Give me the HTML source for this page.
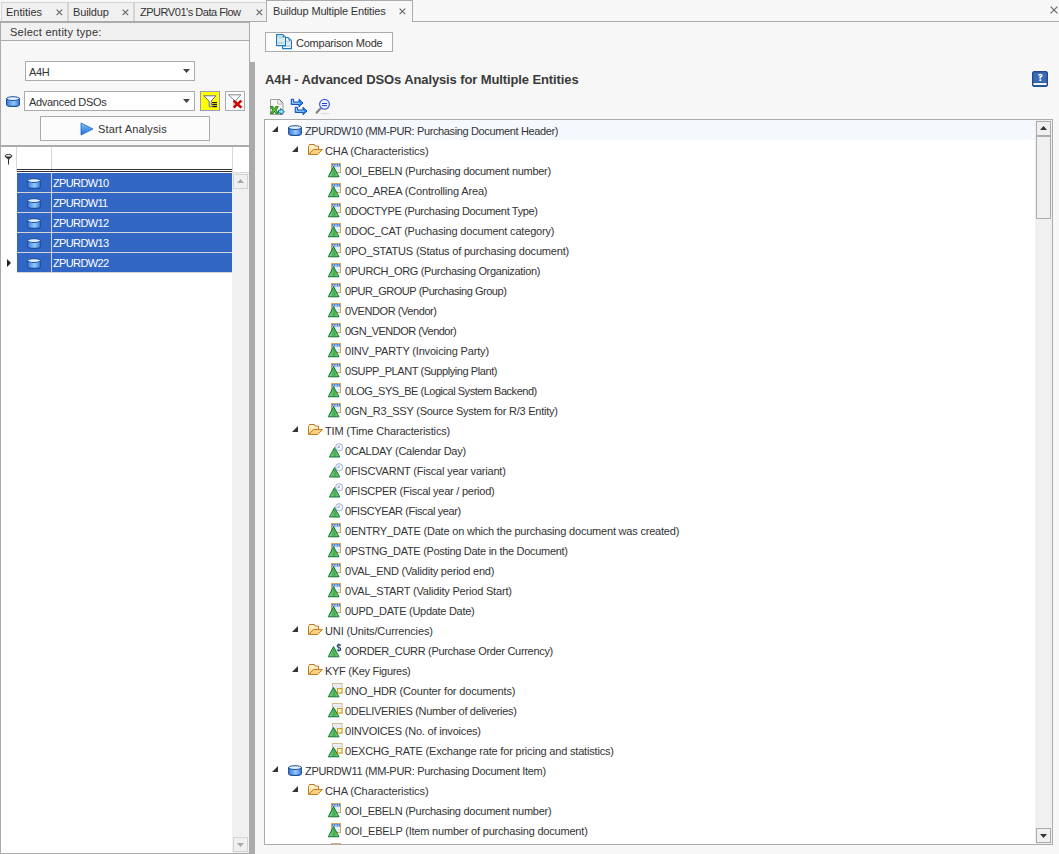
<!DOCTYPE html>
<html><head><meta charset="utf-8">
<style>
*{box-sizing:border-box;margin:0;padding:0}
html,body{width:1059px;height:854px;overflow:hidden;background:#f7f7f7;font-family:"Liberation Sans",sans-serif;font-size:11px;color:#333;position:relative}
.a{position:absolute}
.t{position:absolute;white-space:nowrap;line-height:15px;letter-spacing:-0.3px}
.tab{position:absolute;top:2px;height:19px;background:#f0f0f0;border-top:1px solid #d4d4d4;}
.tx{position:absolute;font-size:11px;color:#666}
.box{position:absolute;border:1px solid #ababab;background:#fff}
</style></head><body>
<!-- TAB STRIP -->
<div class="a" style="left:0;top:21px;width:1059px;height:1px;background:#ababab"></div><div class="a" style="left:0;top:22px;width:250px;height:1px;background:#ababab"></div>
<div class="tab" style="left:1px;width:67px;border-left:1px solid #d4d4d4;border-right:1px solid #d4d4d4"></div>
<div class="t" style="left:6px;top:5px;letter-spacing:0px">Entities</div>
<svg class="a" style="left:56px;top:9px" width="7" height="7" viewBox="0 0 7 7"><path d="M0.6 0.6L6.2 6.2M6.2 0.6L0.6 6.2" stroke="#6a6a6a" stroke-width="1.2"/></svg>
<div class="tab" style="left:68px;width:66px;border-left:1px solid #d4d4d4;border-right:1px solid #d4d4d4"></div>
<div class="t" style="left:73px;top:5px;letter-spacing:-0.13px">Buildup</div>
<svg class="a" style="left:122px;top:9px" width="7" height="7" viewBox="0 0 7 7"><path d="M0.6 0.6L6.2 6.2M6.2 0.6L0.6 6.2" stroke="#6a6a6a" stroke-width="1.2"/></svg>
<div class="tab" style="left:134px;width:132px;border-left:1px solid #d4d4d4"></div>
<div class="t" style="left:140px;top:5px;letter-spacing:-0.47px">ZPURV01's Data Flow</div>
<svg class="a" style="left:256px;top:9px" width="7" height="7" viewBox="0 0 7 7"><path d="M0.6 0.6L6.2 6.2M6.2 0.6L0.6 6.2" stroke="#6a6a6a" stroke-width="1.2"/></svg>
<div class="a" style="left:266px;top:0;width:147px;height:22px;background:#f7f7f7;border:1px solid #ababab;border-bottom:none"></div>
<div class="t" style="left:273px;top:4px;letter-spacing:-0.17px">Buildup Multiple Entities</div>
<svg class="a" style="left:399px;top:8px" width="7" height="7" viewBox="0 0 7 7"><path d="M0.6 0.6L6.2 6.2M6.2 0.6L0.6 6.2" stroke="#6a6a6a" stroke-width="1.2"/></svg>
<svg class="a" style="left:1050px;top:6px" width="8" height="8" viewBox="0 0 8 8"><path d="M0.6 0.6L7.4 7.4M7.4 0.6L0.6 7.4" stroke="#6a6a6a" stroke-width="1.2"/></svg>

<!-- LEFT PANEL -->
<div class="a" style="left:0;top:23px;width:250px;height:831px;border-left:1px solid #ababab;border-right:1px solid #ababab;border-bottom:1px solid #ababab;background:#f7f7f7"></div>
<div class="a" style="left:1px;top:23px;width:248px;height:18px;background:#f0f0f0;border-bottom:1px solid #ababab"></div>
<div class="t" style="left:10px;top:25px;letter-spacing:0.25px">Select entity type:</div>

<div class="box" style="left:25px;top:61px;width:170px;height:20px"></div>
<div class="t" style="left:29px;top:65px">A4H</div>
<svg class="a" style="left:183px;top:69px" width="7" height="4"><path d="M0 0H7L3.5 4Z" fill="#444"/></svg>

<div class="box" style="left:24px;top:91px;width:171px;height:20px"></div>
<div class="t" style="left:29px;top:95px">Advanced DSOs</div>
<svg class="a" style="left:183px;top:99px" width="7" height="4"><path d="M0 0H7L3.5 4Z" fill="#444"/></svg>

<svg class="a" style="left:6px;top:96px" width="14" height="11" viewBox="0 0 14 11"><defs><linearGradient id="cg42" x1="0" y1="0" x2="1" y2="0"><stop offset="0" stop-color="#3c7bd4"/><stop offset="0.55" stop-color="#93c9fc"/><stop offset="1" stop-color="#3c7bd4"/></linearGradient></defs><path d="M0.6 2.6V8.4Q0.6 10.4 7 10.4Q13.4 10.4 13.4 8.4V2.6Z" fill="url(#cg42)" stroke="#1c4f9f" stroke-width="1.1"/><ellipse cx="7" cy="2.6" rx="6.4" ry="1.9" fill="#e3effc" stroke="#1c4f9f" stroke-width="1"/></svg>

<div class="a" style="left:200px;top:91px;width:20px;height:20px;background:#ffff00;border:1px solid #9a9ab8"></div>
<svg class="a" style="left:203px;top:95px" width="15" height="14" viewBox="0 0 15 14"><path d="M0.6 0.8H12.9L8.2 6V11.6Q7.2 12.3 6.2 11.6V6Z" fill="#fff" stroke="#585c88" stroke-width="0.9" stroke-linejoin="round"/><path d="M9.2 7.6H14M9.2 9.6H14M9.2 11.6H14" stroke="#1a1a1a" stroke-width="1.1"/></svg>
<div class="box" style="left:225px;top:91px;width:20px;height:20px;background:#fcfcfc"></div>
<svg class="a" style="left:228px;top:94px" width="15" height="15" viewBox="0 0 15 15"><path d="M0.6 0.8H12.9L8 6.2V12L6 11.4V6.2Z" fill="#fff" stroke="#7a7a7a" stroke-width="0.9" stroke-linejoin="round"/><path d="M5.6 6.6L13.4 13.6M13.4 6.6L5.6 13.6" stroke="#d20000" stroke-width="2.6"/></svg>

<div class="box" style="left:40px;top:116px;width:170px;height:25px;background:#fcfcfc"></div>
<svg class="a" style="left:80px;top:122px" width="14" height="14" viewBox="0 0 14 14"><defs><linearGradient id="pl" x1="0" y1="0" x2="0" y2="1"><stop offset="0" stop-color="#7fc0ff"/><stop offset="1" stop-color="#1f6fd8"/></linearGradient></defs><path d="M1 1L13 7L1 13Z" fill="url(#pl)" stroke="#2a64c0" stroke-width="0.8"/></svg>
<div class="t" style="left:98px;top:122px;letter-spacing:0.16px">Start Analysis</div>

<div class="a" style="left:1px;top:145px;width:248px;height:2px;background:#ababab"></div>
<!-- grid -->
<div class="a" style="left:1px;top:147px;width:248px;height:706px;background:#fff"></div>
<div class="a" style="left:16px;top:147px;width:1px;height:25px;background:#d8d8d8"></div>
<div class="a" style="left:51px;top:147px;width:1px;height:25px;background:#d8d8d8"></div>
<div class="a" style="left:232px;top:147px;width:1px;height:25px;background:#d8d8d8"></div>
<svg class="a" style="left:4px;top:154px" width="9" height="11" viewBox="0 0 9 11"><ellipse cx="4.5" cy="2" rx="3.6" ry="1.5" fill="#fff" stroke="#333" stroke-width="1"/><path d="M1 2.5L4 5.5V10.5H5V5.5L8 2.5Z" fill="#333"/></svg>
<div class="a" style="left:17px;top:169px;width:215px;height:1px;background:#333"></div>
<div class="a" style="left:17px;top:171px;width:215px;height:1px;background:#333"></div>
<div class="a" style="left:17px;top:173px;width:215px;height:19px;background:#3166c4"></div>
<div class="a" style="left:51px;top:173px;width:1px;height:19px;background:#d4d4d4"></div>
<div class="a" style="left:17px;top:192px;width:215px;height:1px;background:#d4d4d4"></div>
<svg class="a" style="left:27px;top:178px" width="14" height="11" viewBox="0 0 14 11"><defs><linearGradient id="cg1" x1="0" y1="0" x2="1" y2="0"><stop offset="0" stop-color="#3c7bd4"/><stop offset="0.55" stop-color="#93c9fc"/><stop offset="1" stop-color="#3c7bd4"/></linearGradient></defs><path d="M0.6 2.6V8.4Q0.6 10.4 7 10.4Q13.4 10.4 13.4 8.4V2.6Z" fill="url(#cg1)" stroke="#1c4f9f" stroke-width="1.1"/><ellipse cx="7" cy="2.6" rx="6.4" ry="1.9" fill="#e3effc" stroke="#1c4f9f" stroke-width="1"/></svg>
<div class="t" style="left:53px;top:176px;color:#fff;letter-spacing:-0.64px">ZPURDW10</div>
<div class="a" style="left:17px;top:193px;width:215px;height:19px;background:#3166c4"></div>
<div class="a" style="left:51px;top:193px;width:1px;height:19px;background:#d4d4d4"></div>
<div class="a" style="left:17px;top:212px;width:215px;height:1px;background:#d4d4d4"></div>
<svg class="a" style="left:27px;top:198px" width="14" height="11" viewBox="0 0 14 11"><defs><linearGradient id="cg2" x1="0" y1="0" x2="1" y2="0"><stop offset="0" stop-color="#3c7bd4"/><stop offset="0.55" stop-color="#93c9fc"/><stop offset="1" stop-color="#3c7bd4"/></linearGradient></defs><path d="M0.6 2.6V8.4Q0.6 10.4 7 10.4Q13.4 10.4 13.4 8.4V2.6Z" fill="url(#cg2)" stroke="#1c4f9f" stroke-width="1.1"/><ellipse cx="7" cy="2.6" rx="6.4" ry="1.9" fill="#e3effc" stroke="#1c4f9f" stroke-width="1"/></svg>
<div class="t" style="left:53px;top:196px;color:#fff;letter-spacing:-0.64px">ZPURDW11</div>
<div class="a" style="left:17px;top:213px;width:215px;height:19px;background:#3166c4"></div>
<div class="a" style="left:51px;top:213px;width:1px;height:19px;background:#d4d4d4"></div>
<div class="a" style="left:17px;top:232px;width:215px;height:1px;background:#d4d4d4"></div>
<svg class="a" style="left:27px;top:218px" width="14" height="11" viewBox="0 0 14 11"><defs><linearGradient id="cg3" x1="0" y1="0" x2="1" y2="0"><stop offset="0" stop-color="#3c7bd4"/><stop offset="0.55" stop-color="#93c9fc"/><stop offset="1" stop-color="#3c7bd4"/></linearGradient></defs><path d="M0.6 2.6V8.4Q0.6 10.4 7 10.4Q13.4 10.4 13.4 8.4V2.6Z" fill="url(#cg3)" stroke="#1c4f9f" stroke-width="1.1"/><ellipse cx="7" cy="2.6" rx="6.4" ry="1.9" fill="#e3effc" stroke="#1c4f9f" stroke-width="1"/></svg>
<div class="t" style="left:53px;top:216px;color:#fff;letter-spacing:-0.64px">ZPURDW12</div>
<div class="a" style="left:17px;top:233px;width:215px;height:19px;background:#3166c4"></div>
<div class="a" style="left:51px;top:233px;width:1px;height:19px;background:#d4d4d4"></div>
<div class="a" style="left:17px;top:252px;width:215px;height:1px;background:#d4d4d4"></div>
<svg class="a" style="left:27px;top:238px" width="14" height="11" viewBox="0 0 14 11"><defs><linearGradient id="cg4" x1="0" y1="0" x2="1" y2="0"><stop offset="0" stop-color="#3c7bd4"/><stop offset="0.55" stop-color="#93c9fc"/><stop offset="1" stop-color="#3c7bd4"/></linearGradient></defs><path d="M0.6 2.6V8.4Q0.6 10.4 7 10.4Q13.4 10.4 13.4 8.4V2.6Z" fill="url(#cg4)" stroke="#1c4f9f" stroke-width="1.1"/><ellipse cx="7" cy="2.6" rx="6.4" ry="1.9" fill="#e3effc" stroke="#1c4f9f" stroke-width="1"/></svg>
<div class="t" style="left:53px;top:236px;color:#fff;letter-spacing:-0.64px">ZPURDW13</div>
<div class="a" style="left:17px;top:253px;width:215px;height:19px;background:#3166c4"></div>
<div class="a" style="left:51px;top:253px;width:1px;height:19px;background:#d4d4d4"></div>
<div class="a" style="left:17px;top:272px;width:215px;height:1px;background:#d4d4d4"></div>
<svg class="a" style="left:27px;top:258px" width="14" height="11" viewBox="0 0 14 11"><defs><linearGradient id="cg5" x1="0" y1="0" x2="1" y2="0"><stop offset="0" stop-color="#3c7bd4"/><stop offset="0.55" stop-color="#93c9fc"/><stop offset="1" stop-color="#3c7bd4"/></linearGradient></defs><path d="M0.6 2.6V8.4Q0.6 10.4 7 10.4Q13.4 10.4 13.4 8.4V2.6Z" fill="url(#cg5)" stroke="#1c4f9f" stroke-width="1.1"/><ellipse cx="7" cy="2.6" rx="6.4" ry="1.9" fill="#e3effc" stroke="#1c4f9f" stroke-width="1"/></svg>
<div class="t" style="left:53px;top:256px;color:#fff;letter-spacing:-0.64px">ZPURDW22</div>
<svg class="a" style="left:7px;top:259px" width="4" height="8"><path d="M0 0L4 4L0 8Z" fill="#222"/></svg>

<div class="a" style="left:232px;top:172px;width:17px;height:681px;background:#f0f0f0;border-top:1px solid #d8d8d8"></div>
<div class="a" style="left:233px;top:174px;width:15px;height:15px;border:1px solid #d4d4d4;background:#f0f0f0"></div>
<svg class="a" style="left:237px;top:179px" width="7" height="4"><path d="M0 4H7L3.5 0Z" fill="#a8a8a8"/></svg>
<div class="a" style="left:233px;top:837px;width:15px;height:15px;border:1px solid #d4d4d4;background:#f0f0f0"></div>
<svg class="a" style="left:237px;top:843px" width="7" height="4"><path d="M0 0H7L3.5 4Z" fill="#a8a8a8"/></svg>

<!-- splitter -->
<div class="a" style="left:249px;top:62px;width:6px;height:792px;background:#ababab"></div>

<!-- RIGHT -->
<div class="box" style="left:265px;top:32px;width:128px;height:20px;background:#fcfcfc"></div>
<svg class="a" style="left:275px;top:33px" width="18" height="18" viewBox="0 0 18 18"><defs><linearGradient id="dg" x1="0" y1="0" x2="0" y2="1"><stop offset="0" stop-color="#a9cde3"/><stop offset="0.5" stop-color="#e6f2f9"/><stop offset="1" stop-color="#a3c9e2"/></linearGradient></defs><path d="M7.6 4.6H13.3L16.4 7.7V15.6H7.6Z" fill="#fff" stroke="#1f78b8" stroke-width="1.2" stroke-linejoin="round"/><rect x="9" y="7.5" width="6" height="6.5" fill="url(#dg)"/><path d="M13.6 6.4Q13.9 7.3 14.8 7.5" stroke="#15508a" stroke-width="1" fill="none"/><path d="M1.6 1.6H7.8L10.4 4.2V12.6H1.6Z" fill="#fff" stroke="#1f78b8" stroke-width="1.2" stroke-linejoin="round"/><rect x="2.8" y="3.2" width="6" height="8" fill="url(#dg)"/><path d="M7.9 3.2Q8.2 4.1 9.1 4.3" stroke="#15508a" stroke-width="1" fill="none"/></svg>
<div class="t" style="left:296px;top:36px;letter-spacing:-0.23px">Comparison Mode</div>

<div class="t" style="left:265px;top:72px;font-size:13px;font-weight:bold;letter-spacing:-0.11px;line-height:15px;color:#3a3a3a">A4H - Advanced DSOs Analysis for Multiple Entities</div>
<svg class="a" style="left:1032px;top:71px" width="16" height="16" viewBox="0 0 16 16"><path d="M2 0.5H14Q15.5 0.5 15.5 2V14Q15.5 15.5 14 15.5H2Q0.5 15.5 0.5 14V2Q0.5 0.5 2 0.5Z" fill="#2e5fa9" stroke="#1f4b93" stroke-width="1"/><rect x="2" y="2" width="12" height="9" fill="#3b6cb4"/><rect x="1.5" y="12" width="13" height="2" fill="#f4f3ea"/><path d="M6 4.6Q6 2.8 8.3 2.8Q10.6 2.8 10.6 4.6Q10.6 5.8 9.1 6.4V7.6H7.4V5.6Q8.8 5.2 8.8 4.6Q8.8 4 8.2 4Q7.7 4 7.6 4.8Z" fill="#fff"/><rect x="7.4" y="8.3" width="1.8" height="1.7" fill="#fff"/></svg>

<svg class="a" style="left:269px;top:98px" width="17" height="18" viewBox="0 0 17 18"><path d="M1.5 1.5H10.3L14 5.2V16.5H1.5Z" fill="#f8f8f8" stroke="#a2a2a2" stroke-width="1"/><path d="M8.6 1.5V6.1H14" fill="#efefef" stroke="#b0b0b0" stroke-width="0.9"/><path d="M10.3 1.5L14 5.2" stroke="#666" stroke-width="1"/><path d="M2.4 9L8.4 15.2M8.4 9L2.4 15.2" stroke="#238a12" stroke-width="2.7"/><path d="M1 8.6H4.2M6.6 8.6H9.6M1 15.3H4.4M6.6 15.3H9.6" stroke="#238a12" stroke-width="1.3"/><path d="M2.8 9.4L8 14.8M8 9.4L2.8 14.8" stroke="#9de47e" stroke-width="0.8"/><path d="M9.5 12.2H11.6V10.6L15.4 13.6L11.6 16.6V15H9.5Z" fill="#86eef6" stroke="#17689c" stroke-width="1" stroke-linejoin="round"/></svg>
<svg class="a" style="left:290px;top:98px" width="18" height="18" viewBox="0 0 18 18"><path d="M1.2 1.2H3.6V4H9V1.2L13 5L9 8.8V6.5H1.2Z" fill="#2b86f0" stroke="#0b43b8" stroke-width="0.9" stroke-linejoin="round"/><path d="M2.4 2V5.2H10" stroke="#bff0ff" stroke-width="0.8" fill="none"/><path d="M5.2 9.2H7.6V12H13V9.2L17 13L13 16.8V14.5H5.2Z" fill="#2b86f0" stroke="#0b43b8" stroke-width="0.9" stroke-linejoin="round"/><path d="M6.4 10V13.2H14" stroke="#bff0ff" stroke-width="0.8" fill="none"/></svg>
<svg class="a" style="left:314px;top:98px" width="17" height="18" viewBox="0 0 17 18"><ellipse cx="11" cy="15.6" rx="5" ry="0.9" fill="#e2e2e2"/><path d="M7.2 9.8L2.6 14.6" stroke="#8a8a8a" stroke-width="2.3" stroke-linecap="round"/><circle cx="10.5" cy="6.3" r="4.9" fill="#eef4fb" stroke="#4466e0" stroke-width="1.3"/><path d="M8 5.5H13M8 7.6H13" stroke="#1f3fbf" stroke-width="1"/></svg>

<div class="box" style="left:264px;top:119px;width:789px;height:726px"></div>
<div class="a" style="left:305px;top:120px;width:730px;height:20px;background:#f5f9fe"></div>
<svg class="a" style="left:272px;top:126px" width="6" height="6" viewBox="0 0 6 6"><path d="M6 0V6H0Z" fill="#333"/></svg>
<svg class="a" style="left:288px;top:125px" width="14" height="11" viewBox="0 0 14 11"><defs><linearGradient id="cg6" x1="0" y1="0" x2="1" y2="0"><stop offset="0" stop-color="#3c7bd4"/><stop offset="0.55" stop-color="#93c9fc"/><stop offset="1" stop-color="#3c7bd4"/></linearGradient></defs><path d="M0.6 2.6V8.4Q0.6 10.4 7 10.4Q13.4 10.4 13.4 8.4V2.6Z" fill="url(#cg6)" stroke="#1c4f9f" stroke-width="1.1"/><ellipse cx="7" cy="2.6" rx="6.4" ry="1.9" fill="#e3effc" stroke="#1c4f9f" stroke-width="1"/></svg>
<div class="t" style="left:305px;top:124px;letter-spacing:-0.366px">ZPURDW10 (MM-PUR: Purchasing Document Header)</div>
<svg class="a" style="left:292px;top:146px" width="6" height="6" viewBox="0 0 6 6"><path d="M6 0V6H0Z" fill="#333"/></svg>
<svg class="a" style="left:308px;top:144px" width="15" height="12" viewBox="0 0 15 12"><defs><linearGradient id="fb7" x1="0" y1="0" x2="0" y2="1"><stop offset="0" stop-color="#fffbe6"/><stop offset="1" stop-color="#f3cf7a"/></linearGradient></defs><path d="M0.5 10.3V2.2L1.4 1.4V0.5H6.4L7.2 2.1H10.5V5.4L5 10.3Z" fill="url(#fb7)" stroke="#c27a1c" stroke-width="1" stroke-linejoin="round"/><path d="M0.8 10.5L5.5 5.5H14.4L9.7 10.5Z" fill="#f6d283" stroke="#c27a1c" stroke-width="1" stroke-linejoin="round"/></svg>
<div class="t" style="left:325px;top:144px;letter-spacing:-0.11px">CHA (Characteristics)</div>
<svg class="a" style="left:328px;top:163px" width="14" height="15" viewBox="0 0 14 15"><defs><linearGradient id="tg8" x1="0" y1="0" x2="1" y2="0"><stop offset="0" stop-color="#8edc8e"/><stop offset="0.55" stop-color="#45ab52"/><stop offset="1" stop-color="#8fda8f"/></linearGradient></defs><rect x="3.5" y="0.5" width="9" height="9" fill="#e9eef8" stroke="#c9a95c"/><rect x="4" y="1" width="8" height="2.5" fill="#4d82d4"/><path d="M5 2.2H6M7 2.2H9M10 2.2H11" stroke="#fff" stroke-width="0.8"/><path d="M5.5 3.5L11 13.8H0.3Z" fill="url(#tg8)" stroke="#12772f" stroke-width="1"/></svg>
<div class="t" style="left:345px;top:164px;letter-spacing:-0.297px">0OI_EBELN (Purchasing document number)</div>
<svg class="a" style="left:328px;top:183px" width="14" height="15" viewBox="0 0 14 15"><defs><linearGradient id="tg9" x1="0" y1="0" x2="1" y2="0"><stop offset="0" stop-color="#8edc8e"/><stop offset="0.55" stop-color="#45ab52"/><stop offset="1" stop-color="#8fda8f"/></linearGradient></defs><rect x="3.5" y="0.5" width="9" height="9" fill="#e9eef8" stroke="#c9a95c"/><rect x="4" y="1" width="8" height="2.5" fill="#4d82d4"/><path d="M5 2.2H6M7 2.2H9M10 2.2H11" stroke="#fff" stroke-width="0.8"/><path d="M5.5 3.5L11 13.8H0.3Z" fill="url(#tg9)" stroke="#12772f" stroke-width="1"/></svg>
<div class="t" style="left:345px;top:184px;letter-spacing:-0.162px">0CO_AREA (Controlling Area)</div>
<svg class="a" style="left:328px;top:203px" width="14" height="15" viewBox="0 0 14 15"><defs><linearGradient id="tg10" x1="0" y1="0" x2="1" y2="0"><stop offset="0" stop-color="#8edc8e"/><stop offset="0.55" stop-color="#45ab52"/><stop offset="1" stop-color="#8fda8f"/></linearGradient></defs><rect x="3.5" y="0.5" width="9" height="9" fill="#e9eef8" stroke="#c9a95c"/><rect x="4" y="1" width="8" height="2.5" fill="#4d82d4"/><path d="M5 2.2H6M7 2.2H9M10 2.2H11" stroke="#fff" stroke-width="0.8"/><path d="M5.5 3.5L11 13.8H0.3Z" fill="url(#tg10)" stroke="#12772f" stroke-width="1"/></svg>
<div class="t" style="left:345px;top:204px;letter-spacing:-0.341px">0DOCTYPE (Purchasing Document Type)</div>
<svg class="a" style="left:328px;top:223px" width="14" height="15" viewBox="0 0 14 15"><defs><linearGradient id="tg11" x1="0" y1="0" x2="1" y2="0"><stop offset="0" stop-color="#8edc8e"/><stop offset="0.55" stop-color="#45ab52"/><stop offset="1" stop-color="#8fda8f"/></linearGradient></defs><rect x="3.5" y="0.5" width="9" height="9" fill="#e9eef8" stroke="#c9a95c"/><rect x="4" y="1" width="8" height="2.5" fill="#4d82d4"/><path d="M5 2.2H6M7 2.2H9M10 2.2H11" stroke="#fff" stroke-width="0.8"/><path d="M5.5 3.5L11 13.8H0.3Z" fill="url(#tg11)" stroke="#12772f" stroke-width="1"/></svg>
<div class="t" style="left:345px;top:224px;letter-spacing:-0.176px">0DOC_CAT (Puchasing document category)</div>
<svg class="a" style="left:328px;top:243px" width="14" height="15" viewBox="0 0 14 15"><defs><linearGradient id="tg12" x1="0" y1="0" x2="1" y2="0"><stop offset="0" stop-color="#8edc8e"/><stop offset="0.55" stop-color="#45ab52"/><stop offset="1" stop-color="#8fda8f"/></linearGradient></defs><rect x="3.5" y="0.5" width="9" height="9" fill="#e9eef8" stroke="#c9a95c"/><rect x="4" y="1" width="8" height="2.5" fill="#4d82d4"/><path d="M5 2.2H6M7 2.2H9M10 2.2H11" stroke="#fff" stroke-width="0.8"/><path d="M5.5 3.5L11 13.8H0.3Z" fill="url(#tg12)" stroke="#12772f" stroke-width="1"/></svg>
<div class="t" style="left:345px;top:244px;letter-spacing:-0.188px">0PO_STATUS (Status of purchasing document)</div>
<svg class="a" style="left:328px;top:263px" width="14" height="15" viewBox="0 0 14 15"><defs><linearGradient id="tg13" x1="0" y1="0" x2="1" y2="0"><stop offset="0" stop-color="#8edc8e"/><stop offset="0.55" stop-color="#45ab52"/><stop offset="1" stop-color="#8fda8f"/></linearGradient></defs><rect x="3.5" y="0.5" width="9" height="9" fill="#e9eef8" stroke="#c9a95c"/><rect x="4" y="1" width="8" height="2.5" fill="#4d82d4"/><path d="M5 2.2H6M7 2.2H9M10 2.2H11" stroke="#fff" stroke-width="0.8"/><path d="M5.5 3.5L11 13.8H0.3Z" fill="url(#tg13)" stroke="#12772f" stroke-width="1"/></svg>
<div class="t" style="left:345px;top:264px;letter-spacing:-0.34px">0PURCH_ORG (Purchasing Organization)</div>
<svg class="a" style="left:328px;top:283px" width="14" height="15" viewBox="0 0 14 15"><defs><linearGradient id="tg14" x1="0" y1="0" x2="1" y2="0"><stop offset="0" stop-color="#8edc8e"/><stop offset="0.55" stop-color="#45ab52"/><stop offset="1" stop-color="#8fda8f"/></linearGradient></defs><rect x="3.5" y="0.5" width="9" height="9" fill="#e9eef8" stroke="#c9a95c"/><rect x="4" y="1" width="8" height="2.5" fill="#4d82d4"/><path d="M5 2.2H6M7 2.2H9M10 2.2H11" stroke="#fff" stroke-width="0.8"/><path d="M5.5 3.5L11 13.8H0.3Z" fill="url(#tg14)" stroke="#12772f" stroke-width="1"/></svg>
<div class="t" style="left:345px;top:284px;letter-spacing:-0.457px">0PUR_GROUP (Purchasing Group)</div>
<svg class="a" style="left:328px;top:303px" width="14" height="15" viewBox="0 0 14 15"><defs><linearGradient id="tg15" x1="0" y1="0" x2="1" y2="0"><stop offset="0" stop-color="#8edc8e"/><stop offset="0.55" stop-color="#45ab52"/><stop offset="1" stop-color="#8fda8f"/></linearGradient></defs><rect x="3.5" y="0.5" width="9" height="9" fill="#e9eef8" stroke="#c9a95c"/><rect x="4" y="1" width="8" height="2.5" fill="#4d82d4"/><path d="M5 2.2H6M7 2.2H9M10 2.2H11" stroke="#fff" stroke-width="0.8"/><path d="M5.5 3.5L11 13.8H0.3Z" fill="url(#tg15)" stroke="#12772f" stroke-width="1"/></svg>
<div class="t" style="left:345px;top:304px;letter-spacing:-0.427px">0VENDOR (Vendor)</div>
<svg class="a" style="left:328px;top:323px" width="14" height="15" viewBox="0 0 14 15"><defs><linearGradient id="tg16" x1="0" y1="0" x2="1" y2="0"><stop offset="0" stop-color="#8edc8e"/><stop offset="0.55" stop-color="#45ab52"/><stop offset="1" stop-color="#8fda8f"/></linearGradient></defs><rect x="3.5" y="0.5" width="9" height="9" fill="#e9eef8" stroke="#c9a95c"/><rect x="4" y="1" width="8" height="2.5" fill="#4d82d4"/><path d="M5 2.2H6M7 2.2H9M10 2.2H11" stroke="#fff" stroke-width="0.8"/><path d="M5.5 3.5L11 13.8H0.3Z" fill="url(#tg16)" stroke="#12772f" stroke-width="1"/></svg>
<div class="t" style="left:345px;top:324px;letter-spacing:-0.517px">0GN_VENDOR (Vendor)</div>
<svg class="a" style="left:328px;top:343px" width="14" height="15" viewBox="0 0 14 15"><defs><linearGradient id="tg17" x1="0" y1="0" x2="1" y2="0"><stop offset="0" stop-color="#8edc8e"/><stop offset="0.55" stop-color="#45ab52"/><stop offset="1" stop-color="#8fda8f"/></linearGradient></defs><rect x="3.5" y="0.5" width="9" height="9" fill="#e9eef8" stroke="#c9a95c"/><rect x="4" y="1" width="8" height="2.5" fill="#4d82d4"/><path d="M5 2.2H6M7 2.2H9M10 2.2H11" stroke="#fff" stroke-width="0.8"/><path d="M5.5 3.5L11 13.8H0.3Z" fill="url(#tg17)" stroke="#12772f" stroke-width="1"/></svg>
<div class="t" style="left:345px;top:344px;letter-spacing:-0.167px">0INV_PARTY (Invoicing Party)</div>
<svg class="a" style="left:328px;top:363px" width="14" height="15" viewBox="0 0 14 15"><defs><linearGradient id="tg18" x1="0" y1="0" x2="1" y2="0"><stop offset="0" stop-color="#8edc8e"/><stop offset="0.55" stop-color="#45ab52"/><stop offset="1" stop-color="#8fda8f"/></linearGradient></defs><rect x="3.5" y="0.5" width="9" height="9" fill="#e9eef8" stroke="#c9a95c"/><rect x="4" y="1" width="8" height="2.5" fill="#4d82d4"/><path d="M5 2.2H6M7 2.2H9M10 2.2H11" stroke="#fff" stroke-width="0.8"/><path d="M5.5 3.5L11 13.8H0.3Z" fill="url(#tg18)" stroke="#12772f" stroke-width="1"/></svg>
<div class="t" style="left:345px;top:364px;letter-spacing:-0.421px">0SUPP_PLANT (Supplying Plant)</div>
<svg class="a" style="left:328px;top:383px" width="14" height="15" viewBox="0 0 14 15"><defs><linearGradient id="tg19" x1="0" y1="0" x2="1" y2="0"><stop offset="0" stop-color="#8edc8e"/><stop offset="0.55" stop-color="#45ab52"/><stop offset="1" stop-color="#8fda8f"/></linearGradient></defs><rect x="3.5" y="0.5" width="9" height="9" fill="#e9eef8" stroke="#c9a95c"/><rect x="4" y="1" width="8" height="2.5" fill="#4d82d4"/><path d="M5 2.2H6M7 2.2H9M10 2.2H11" stroke="#fff" stroke-width="0.8"/><path d="M5.5 3.5L11 13.8H0.3Z" fill="url(#tg19)" stroke="#12772f" stroke-width="1"/></svg>
<div class="t" style="left:345px;top:384px;letter-spacing:-0.483px">0LOG_SYS_BE (Logical System Backend)</div>
<svg class="a" style="left:328px;top:403px" width="14" height="15" viewBox="0 0 14 15"><defs><linearGradient id="tg20" x1="0" y1="0" x2="1" y2="0"><stop offset="0" stop-color="#8edc8e"/><stop offset="0.55" stop-color="#45ab52"/><stop offset="1" stop-color="#8fda8f"/></linearGradient></defs><rect x="3.5" y="0.5" width="9" height="9" fill="#e9eef8" stroke="#c9a95c"/><rect x="4" y="1" width="8" height="2.5" fill="#4d82d4"/><path d="M5 2.2H6M7 2.2H9M10 2.2H11" stroke="#fff" stroke-width="0.8"/><path d="M5.5 3.5L11 13.8H0.3Z" fill="url(#tg20)" stroke="#12772f" stroke-width="1"/></svg>
<div class="t" style="left:345px;top:404px;letter-spacing:-0.235px">0GN_R3_SSY (Source System for R/3 Entity)</div>
<svg class="a" style="left:292px;top:426px" width="6" height="6" viewBox="0 0 6 6"><path d="M6 0V6H0Z" fill="#333"/></svg>
<svg class="a" style="left:308px;top:424px" width="15" height="12" viewBox="0 0 15 12"><defs><linearGradient id="fb21" x1="0" y1="0" x2="0" y2="1"><stop offset="0" stop-color="#fffbe6"/><stop offset="1" stop-color="#f3cf7a"/></linearGradient></defs><path d="M0.5 10.3V2.2L1.4 1.4V0.5H6.4L7.2 2.1H10.5V5.4L5 10.3Z" fill="url(#fb21)" stroke="#c27a1c" stroke-width="1" stroke-linejoin="round"/><path d="M0.8 10.5L5.5 5.5H14.4L9.7 10.5Z" fill="#f6d283" stroke="#c27a1c" stroke-width="1" stroke-linejoin="round"/></svg>
<div class="t" style="left:325px;top:424px;letter-spacing:-0.156px">TIM (Time Characteristics)</div>
<svg class="a" style="left:329px;top:443px" width="16" height="15" viewBox="0 0 16 15"><defs><linearGradient id="tg22" x1="0" y1="0" x2="1" y2="0"><stop offset="0" stop-color="#8edc8e"/><stop offset="0.55" stop-color="#45ab52"/><stop offset="1" stop-color="#8fda8f"/></linearGradient></defs><path d="M5.5 4.5L10.8 14H0.4Z" fill="url(#tg22)" stroke="#12772f" stroke-width="1"/><circle cx="10.2" cy="4.2" r="3.6" fill="#f4f7fd" stroke="#94a9d4" stroke-width="0.9"/><path d="M10.2 2.2V4.4H8.5" stroke="#6f88c2" stroke-width="0.8" fill="none"/></svg>
<div class="t" style="left:345px;top:444px;letter-spacing:-0.271px">0CALDAY (Calendar Day)</div>
<svg class="a" style="left:329px;top:463px" width="16" height="15" viewBox="0 0 16 15"><defs><linearGradient id="tg23" x1="0" y1="0" x2="1" y2="0"><stop offset="0" stop-color="#8edc8e"/><stop offset="0.55" stop-color="#45ab52"/><stop offset="1" stop-color="#8fda8f"/></linearGradient></defs><path d="M5.5 4.5L10.8 14H0.4Z" fill="url(#tg23)" stroke="#12772f" stroke-width="1"/><circle cx="10.2" cy="4.2" r="3.6" fill="#f4f7fd" stroke="#94a9d4" stroke-width="0.9"/><path d="M10.2 2.2V4.4H8.5" stroke="#6f88c2" stroke-width="0.8" fill="none"/></svg>
<div class="t" style="left:345px;top:464px;letter-spacing:-0.2px">0FISCVARNT (Fiscal year variant)</div>
<svg class="a" style="left:329px;top:483px" width="16" height="15" viewBox="0 0 16 15"><defs><linearGradient id="tg24" x1="0" y1="0" x2="1" y2="0"><stop offset="0" stop-color="#8edc8e"/><stop offset="0.55" stop-color="#45ab52"/><stop offset="1" stop-color="#8fda8f"/></linearGradient></defs><path d="M5.5 4.5L10.8 14H0.4Z" fill="url(#tg24)" stroke="#12772f" stroke-width="1"/><circle cx="10.2" cy="4.2" r="3.6" fill="#f4f7fd" stroke="#94a9d4" stroke-width="0.9"/><path d="M10.2 2.2V4.4H8.5" stroke="#6f88c2" stroke-width="0.8" fill="none"/></svg>
<div class="t" style="left:345px;top:484px;letter-spacing:-0.247px">0FISCPER (Fiscal year / period)</div>
<svg class="a" style="left:329px;top:503px" width="16" height="15" viewBox="0 0 16 15"><defs><linearGradient id="tg25" x1="0" y1="0" x2="1" y2="0"><stop offset="0" stop-color="#8edc8e"/><stop offset="0.55" stop-color="#45ab52"/><stop offset="1" stop-color="#8fda8f"/></linearGradient></defs><path d="M5.5 4.5L10.8 14H0.4Z" fill="url(#tg25)" stroke="#12772f" stroke-width="1"/><circle cx="10.2" cy="4.2" r="3.6" fill="#f4f7fd" stroke="#94a9d4" stroke-width="0.9"/><path d="M10.2 2.2V4.4H8.5" stroke="#6f88c2" stroke-width="0.8" fill="none"/></svg>
<div class="t" style="left:345px;top:504px;letter-spacing:-0.386px">0FISCYEAR (Fiscal year)</div>
<svg class="a" style="left:328px;top:523px" width="14" height="15" viewBox="0 0 14 15"><defs><linearGradient id="tg26" x1="0" y1="0" x2="1" y2="0"><stop offset="0" stop-color="#8edc8e"/><stop offset="0.55" stop-color="#45ab52"/><stop offset="1" stop-color="#8fda8f"/></linearGradient></defs><rect x="3.5" y="0.5" width="9" height="9" fill="#e9eef8" stroke="#c9a95c"/><rect x="4" y="1" width="8" height="2.5" fill="#4d82d4"/><path d="M5 2.2H6M7 2.2H9M10 2.2H11" stroke="#fff" stroke-width="0.8"/><path d="M5.5 3.5L11 13.8H0.3Z" fill="url(#tg26)" stroke="#12772f" stroke-width="1"/></svg>
<div class="t" style="left:345px;top:524px;letter-spacing:-0.202px">0ENTRY_DATE (Date on which the purchasing document was created)</div>
<svg class="a" style="left:328px;top:543px" width="14" height="15" viewBox="0 0 14 15"><defs><linearGradient id="tg27" x1="0" y1="0" x2="1" y2="0"><stop offset="0" stop-color="#8edc8e"/><stop offset="0.55" stop-color="#45ab52"/><stop offset="1" stop-color="#8fda8f"/></linearGradient></defs><rect x="3.5" y="0.5" width="9" height="9" fill="#e9eef8" stroke="#c9a95c"/><rect x="4" y="1" width="8" height="2.5" fill="#4d82d4"/><path d="M5 2.2H6M7 2.2H9M10 2.2H11" stroke="#fff" stroke-width="0.8"/><path d="M5.5 3.5L11 13.8H0.3Z" fill="url(#tg27)" stroke="#12772f" stroke-width="1"/></svg>
<div class="t" style="left:345px;top:544px;letter-spacing:-0.298px">0PSTNG_DATE (Posting Date in the Document)</div>
<svg class="a" style="left:328px;top:563px" width="14" height="15" viewBox="0 0 14 15"><defs><linearGradient id="tg28" x1="0" y1="0" x2="1" y2="0"><stop offset="0" stop-color="#8edc8e"/><stop offset="0.55" stop-color="#45ab52"/><stop offset="1" stop-color="#8fda8f"/></linearGradient></defs><rect x="3.5" y="0.5" width="9" height="9" fill="#e9eef8" stroke="#c9a95c"/><rect x="4" y="1" width="8" height="2.5" fill="#4d82d4"/><path d="M5 2.2H6M7 2.2H9M10 2.2H11" stroke="#fff" stroke-width="0.8"/><path d="M5.5 3.5L11 13.8H0.3Z" fill="url(#tg28)" stroke="#12772f" stroke-width="1"/></svg>
<div class="t" style="left:345px;top:564px;letter-spacing:-0.21px">0VAL_END (Validity period end)</div>
<svg class="a" style="left:328px;top:583px" width="14" height="15" viewBox="0 0 14 15"><defs><linearGradient id="tg29" x1="0" y1="0" x2="1" y2="0"><stop offset="0" stop-color="#8edc8e"/><stop offset="0.55" stop-color="#45ab52"/><stop offset="1" stop-color="#8fda8f"/></linearGradient></defs><rect x="3.5" y="0.5" width="9" height="9" fill="#e9eef8" stroke="#c9a95c"/><rect x="4" y="1" width="8" height="2.5" fill="#4d82d4"/><path d="M5 2.2H6M7 2.2H9M10 2.2H11" stroke="#fff" stroke-width="0.8"/><path d="M5.5 3.5L11 13.8H0.3Z" fill="url(#tg29)" stroke="#12772f" stroke-width="1"/></svg>
<div class="t" style="left:345px;top:584px;letter-spacing:-0.191px">0VAL_START (Validity Period Start)</div>
<svg class="a" style="left:328px;top:603px" width="14" height="15" viewBox="0 0 14 15"><defs><linearGradient id="tg30" x1="0" y1="0" x2="1" y2="0"><stop offset="0" stop-color="#8edc8e"/><stop offset="0.55" stop-color="#45ab52"/><stop offset="1" stop-color="#8fda8f"/></linearGradient></defs><rect x="3.5" y="0.5" width="9" height="9" fill="#e9eef8" stroke="#c9a95c"/><rect x="4" y="1" width="8" height="2.5" fill="#4d82d4"/><path d="M5 2.2H6M7 2.2H9M10 2.2H11" stroke="#fff" stroke-width="0.8"/><path d="M5.5 3.5L11 13.8H0.3Z" fill="url(#tg30)" stroke="#12772f" stroke-width="1"/></svg>
<div class="t" style="left:345px;top:604px;letter-spacing:-0.295px">0UPD_DATE (Update Date)</div>
<svg class="a" style="left:292px;top:626px" width="6" height="6" viewBox="0 0 6 6"><path d="M6 0V6H0Z" fill="#333"/></svg>
<svg class="a" style="left:308px;top:624px" width="15" height="12" viewBox="0 0 15 12"><defs><linearGradient id="fb31" x1="0" y1="0" x2="0" y2="1"><stop offset="0" stop-color="#fffbe6"/><stop offset="1" stop-color="#f3cf7a"/></linearGradient></defs><path d="M0.5 10.3V2.2L1.4 1.4V0.5H6.4L7.2 2.1H10.5V5.4L5 10.3Z" fill="url(#fb31)" stroke="#c27a1c" stroke-width="1" stroke-linejoin="round"/><path d="M0.8 10.5L5.5 5.5H14.4L9.7 10.5Z" fill="#f6d283" stroke="#c27a1c" stroke-width="1" stroke-linejoin="round"/></svg>
<div class="t" style="left:325px;top:624px;letter-spacing:-0.129px">UNI (Units/Currencies)</div>
<svg class="a" style="left:328px;top:643px" width="15" height="15" viewBox="0 0 15 15"><defs><linearGradient id="tg32" x1="0" y1="0" x2="1" y2="0"><stop offset="0" stop-color="#8edc8e"/><stop offset="0.55" stop-color="#45ab52"/><stop offset="1" stop-color="#8fda8f"/></linearGradient></defs><path d="M5.5 3.5L11 13.8H0.3Z" fill="url(#tg32)" stroke="#12772f" stroke-width="1"/><path d="M12.6 2.6Q12.2 1.6 10.8 1.6Q9.2 1.6 9.2 3Q9.2 4.1 10.9 4.5Q12.7 4.9 12.7 6.2Q12.7 7.6 10.9 7.6Q9.4 7.6 9 6.5" fill="none" stroke="#27466f" stroke-width="1.2"/><path d="M10.9 0.5V8.6" stroke="#27466f" stroke-width="0.9"/></svg>
<div class="t" style="left:345px;top:644px;letter-spacing:-0.311px">0ORDER_CURR (Purchase Order Currency)</div>
<svg class="a" style="left:292px;top:666px" width="6" height="6" viewBox="0 0 6 6"><path d="M6 0V6H0Z" fill="#333"/></svg>
<svg class="a" style="left:308px;top:664px" width="15" height="12" viewBox="0 0 15 12"><defs><linearGradient id="fb33" x1="0" y1="0" x2="0" y2="1"><stop offset="0" stop-color="#fffbe6"/><stop offset="1" stop-color="#f3cf7a"/></linearGradient></defs><path d="M0.5 10.3V2.2L1.4 1.4V0.5H6.4L7.2 2.1H10.5V5.4L5 10.3Z" fill="url(#fb33)" stroke="#c27a1c" stroke-width="1" stroke-linejoin="round"/><path d="M0.8 10.5L5.5 5.5H14.4L9.7 10.5Z" fill="#f6d283" stroke="#c27a1c" stroke-width="1" stroke-linejoin="round"/></svg>
<div class="t" style="left:325px;top:664px;letter-spacing:-0.294px">KYF (Key Figures)</div>
<svg class="a" style="left:328px;top:683px" width="15" height="15" viewBox="0 0 15 15"><defs><linearGradient id="tg34" x1="0" y1="0" x2="1" y2="0"><stop offset="0" stop-color="#8edc8e"/><stop offset="0.55" stop-color="#45ab52"/><stop offset="1" stop-color="#8fda8f"/></linearGradient></defs><rect x="4.5" y="0.5" width="9.5" height="9.5" fill="#eef2fa" stroke="#cbb27a" stroke-width="0.9"/><path d="M4.5 3.5H14M4.5 6.5H14M8 0.5V10M11 0.5V10" stroke="#d8e0ee" stroke-width="0.6"/><path d="M5.5 4.5L11 13.8H0.3Z" fill="url(#tg34)" stroke="#12772f" stroke-width="1"/><rect x="9.5" y="5.5" width="4.5" height="4.5" fill="#fff6c8" stroke="#d49a1a" stroke-width="1"/></svg>
<div class="t" style="left:345px;top:684px;letter-spacing:-0.147px">0NO_HDR (Counter for documents)</div>
<svg class="a" style="left:328px;top:703px" width="15" height="15" viewBox="0 0 15 15"><defs><linearGradient id="tg35" x1="0" y1="0" x2="1" y2="0"><stop offset="0" stop-color="#8edc8e"/><stop offset="0.55" stop-color="#45ab52"/><stop offset="1" stop-color="#8fda8f"/></linearGradient></defs><rect x="4.5" y="0.5" width="9.5" height="9.5" fill="#eef2fa" stroke="#cbb27a" stroke-width="0.9"/><path d="M4.5 3.5H14M4.5 6.5H14M8 0.5V10M11 0.5V10" stroke="#d8e0ee" stroke-width="0.6"/><path d="M5.5 4.5L11 13.8H0.3Z" fill="url(#tg35)" stroke="#12772f" stroke-width="1"/><rect x="9.5" y="5.5" width="4.5" height="4.5" fill="#fff6c8" stroke="#d49a1a" stroke-width="1"/></svg>
<div class="t" style="left:345px;top:704px;letter-spacing:-0.312px">0DELIVERIES (Number of deliveries)</div>
<svg class="a" style="left:328px;top:723px" width="15" height="15" viewBox="0 0 15 15"><defs><linearGradient id="tg36" x1="0" y1="0" x2="1" y2="0"><stop offset="0" stop-color="#8edc8e"/><stop offset="0.55" stop-color="#45ab52"/><stop offset="1" stop-color="#8fda8f"/></linearGradient></defs><rect x="4.5" y="0.5" width="9.5" height="9.5" fill="#eef2fa" stroke="#cbb27a" stroke-width="0.9"/><path d="M4.5 3.5H14M4.5 6.5H14M8 0.5V10M11 0.5V10" stroke="#d8e0ee" stroke-width="0.6"/><path d="M5.5 4.5L11 13.8H0.3Z" fill="url(#tg36)" stroke="#12772f" stroke-width="1"/><rect x="9.5" y="5.5" width="4.5" height="4.5" fill="#fff6c8" stroke="#d49a1a" stroke-width="1"/></svg>
<div class="t" style="left:345px;top:724px;letter-spacing:-0.2px">0INVOICES (No. of invoices)</div>
<svg class="a" style="left:328px;top:743px" width="15" height="15" viewBox="0 0 15 15"><defs><linearGradient id="tg37" x1="0" y1="0" x2="1" y2="0"><stop offset="0" stop-color="#8edc8e"/><stop offset="0.55" stop-color="#45ab52"/><stop offset="1" stop-color="#8fda8f"/></linearGradient></defs><rect x="4.5" y="0.5" width="9.5" height="9.5" fill="#eef2fa" stroke="#cbb27a" stroke-width="0.9"/><path d="M4.5 3.5H14M4.5 6.5H14M8 0.5V10M11 0.5V10" stroke="#d8e0ee" stroke-width="0.6"/><path d="M5.5 4.5L11 13.8H0.3Z" fill="url(#tg37)" stroke="#12772f" stroke-width="1"/><rect x="9.5" y="5.5" width="4.5" height="4.5" fill="#fff6c8" stroke="#d49a1a" stroke-width="1"/></svg>
<div class="t" style="left:345px;top:744px;letter-spacing:-0.194px">0EXCHG_RATE (Exchange rate for pricing and statistics)</div>
<svg class="a" style="left:272px;top:766px" width="6" height="6" viewBox="0 0 6 6"><path d="M6 0V6H0Z" fill="#333"/></svg>
<svg class="a" style="left:288px;top:765px" width="14" height="11" viewBox="0 0 14 11"><defs><linearGradient id="cg38" x1="0" y1="0" x2="1" y2="0"><stop offset="0" stop-color="#3c7bd4"/><stop offset="0.55" stop-color="#93c9fc"/><stop offset="1" stop-color="#3c7bd4"/></linearGradient></defs><path d="M0.6 2.6V8.4Q0.6 10.4 7 10.4Q13.4 10.4 13.4 8.4V2.6Z" fill="url(#cg38)" stroke="#1c4f9f" stroke-width="1.1"/><ellipse cx="7" cy="2.6" rx="6.4" ry="1.9" fill="#e3effc" stroke="#1c4f9f" stroke-width="1"/></svg>
<div class="t" style="left:305px;top:764px;letter-spacing:-0.31px">ZPURDW11 (MM-PUR: Purchasing Document Item)</div>
<svg class="a" style="left:292px;top:786px" width="6" height="6" viewBox="0 0 6 6"><path d="M6 0V6H0Z" fill="#333"/></svg>
<svg class="a" style="left:308px;top:784px" width="15" height="12" viewBox="0 0 15 12"><defs><linearGradient id="fb39" x1="0" y1="0" x2="0" y2="1"><stop offset="0" stop-color="#fffbe6"/><stop offset="1" stop-color="#f3cf7a"/></linearGradient></defs><path d="M0.5 10.3V2.2L1.4 1.4V0.5H6.4L7.2 2.1H10.5V5.4L5 10.3Z" fill="url(#fb39)" stroke="#c27a1c" stroke-width="1" stroke-linejoin="round"/><path d="M0.8 10.5L5.5 5.5H14.4L9.7 10.5Z" fill="#f6d283" stroke="#c27a1c" stroke-width="1" stroke-linejoin="round"/></svg>
<div class="t" style="left:325px;top:784px;letter-spacing:-0.11px">CHA (Characteristics)</div>
<svg class="a" style="left:328px;top:803px" width="14" height="15" viewBox="0 0 14 15"><defs><linearGradient id="tg40" x1="0" y1="0" x2="1" y2="0"><stop offset="0" stop-color="#8edc8e"/><stop offset="0.55" stop-color="#45ab52"/><stop offset="1" stop-color="#8fda8f"/></linearGradient></defs><rect x="3.5" y="0.5" width="9" height="9" fill="#e9eef8" stroke="#c9a95c"/><rect x="4" y="1" width="8" height="2.5" fill="#4d82d4"/><path d="M5 2.2H6M7 2.2H9M10 2.2H11" stroke="#fff" stroke-width="0.8"/><path d="M5.5 3.5L11 13.8H0.3Z" fill="url(#tg40)" stroke="#12772f" stroke-width="1"/></svg>
<div class="t" style="left:345px;top:804px;letter-spacing:-0.284px">0OI_EBELN (Purchasing document number)</div>
<svg class="a" style="left:328px;top:823px" width="14" height="15" viewBox="0 0 14 15"><defs><linearGradient id="tg41" x1="0" y1="0" x2="1" y2="0"><stop offset="0" stop-color="#8edc8e"/><stop offset="0.55" stop-color="#45ab52"/><stop offset="1" stop-color="#8fda8f"/></linearGradient></defs><rect x="3.5" y="0.5" width="9" height="9" fill="#e9eef8" stroke="#c9a95c"/><rect x="4" y="1" width="8" height="2.5" fill="#4d82d4"/><path d="M5 2.2H6M7 2.2H9M10 2.2H11" stroke="#fff" stroke-width="0.8"/><path d="M5.5 3.5L11 13.8H0.3Z" fill="url(#tg41)" stroke="#12772f" stroke-width="1"/></svg>
<div class="t" style="left:345px;top:824px;letter-spacing:-0.198px">0OI_EBELP (Item number of purchasing document)</div>
<div class="a" style="left:331px;top:843px;width:10px;height:1px;background:#cdb26e"></div>
<div class="a" style="left:1035px;top:120px;width:17px;height:724px;background:#f0f0f0"></div>
<div class="a" style="left:1036px;top:121px;width:15px;height:15px;border:1px solid #ababab;background:#f0f0f0"></div>
<svg class="a" style="left:1040px;top:126px" width="7" height="4"><path d="M0 4H7L3.5 0Z" fill="#333"/></svg>
<div class="a" style="left:1036px;top:136px;width:15px;height:83px;border:1px solid #ababab;background:#f0f0f0"></div>
<div class="a" style="left:1036px;top:828px;width:15px;height:15px;border:1px solid #ababab;background:#f0f0f0"></div>
<svg class="a" style="left:1040px;top:834px" width="7" height="4"><path d="M0 0H7L3.5 4Z" fill="#333"/></svg>
</body></html>
